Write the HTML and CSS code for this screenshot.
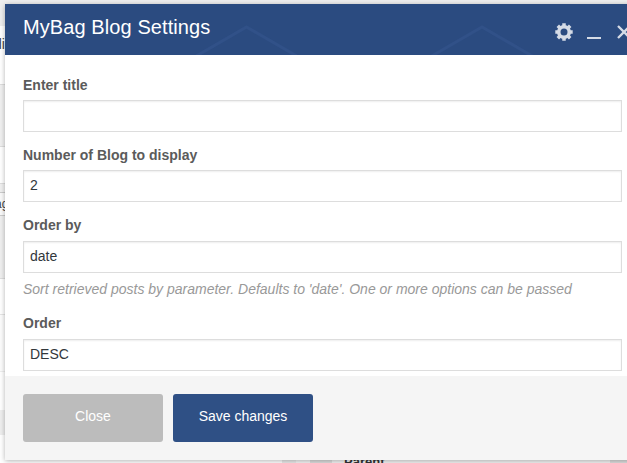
FILE: index.html
```html
<!DOCTYPE html>
<html lang="en">
<head>
<meta charset="utf-8">
<title>MyBag Blog Settings</title>
<link rel="stylesheet" href="styles.css">
</head>
<body>
<div class="page-behind">
  <div class="strip strip-top"></div>
  <div class="strip strip-title"><span>di</span></div>
  <div class="strip strip-gap"></div>
  <div class="strip strip-row"></div>
  <div class="strip strip-divider"></div>
  <div class="strip strip-tag"><span>ag</span></div>
  <div class="strip strip-wide"></div>
  <div class="strip strip-a"></div>
  <div class="strip strip-b"></div>
  <div class="strip strip-c"></div>
  <div class="strip strip-d"></div>
  <div class="strip strip-end"></div>
  <div class="strip strip-bottom">
    <i class="blank"></i><i class="handle"></i><i class="space"></i><i class="handle-dark"></i>
    <b class="parent">Parent</b><i class="corner"></i>
  </div>
</div>
<section class="modal">
  <header class="modal-header">
    <svg class="pattern" width="622" height="51" viewBox="0 0 622 51" aria-hidden="true">
      <path d="M190.500 52.500L241.500 23L292.500 52.500M426 52.500L477 23L528 52.500"/>
    </svg>
    <h1>MyBag Blog Settings</h1>
    <div class="controls">
      <svg class="gear" width="18" height="18" viewBox="0 0 18 18" aria-hidden="true">
        <circle cx="9" cy="9" r="5.250"/>
        <path d="M9 0.300V3.500M9 14.500V17.700M0.300 9H3.500M14.500 9H17.700M2.800 2.800L5 5M13 13L15.200 15.200M15.200 2.800L13 5M5 13L2.800 15.200"/>
      </svg>
      <i class="minimize"></i>
      <svg class="close" width="14" height="14" viewBox="0 0 14 14" aria-hidden="true"><path d="M1 1L13 13M13 1L1 13"/></svg>
    </div>
  </header>
  <form class="fields">
    <label for="title">Enter title</label>
    <input id="title" type="text">
    <label for="number">Number of Blog to display</label>
    <input id="number" type="text" value="2">
    <label class="order-by" for="orderby">Order by</label>
    <input id="orderby" type="text" value="date">
    <p class="hint">Sort retrieved posts by parameter. Defaults to 'date'. One or more options can be passed</p>
    <label class="order" for="order">Order</label>
    <input id="order" type="text" value="DESC">
  </form>
  <footer class="modal-footer">
    <button class="btn-close" type="button">Close</button>
    <button class="btn-save" type="button">Save changes</button>
  </footer>
</section>
</body>
</html>
```
FILE: styles.css
```css
* { box-sizing: border-box; }
body {
  margin: 0;
  width: 627px;
  height: 463px;
  overflow: hidden;
  position: relative;
  background: #fff;
  font-family: "Liberation Sans", Arial, sans-serif;
  font-size: 14px;
}
.page-behind { display: flex; flex-direction: column; height: 463px; }
.strip { flex: none; overflow: hidden; background: #fff; }
.strip-top { height: 26px; background: #eee; }
.strip-title { height: 59px; border-bottom: 1px solid #ddd; color: #444; line-height: 36px; }
.strip-title span { margin-left: -6px; }
.strip-gap { height: 62px; background: #f0f0f0; border-bottom: 1px solid #ddd; }
.strip-row { height: 37px; border-bottom: 1px solid #ddd; }
.strip-divider { height: 9px; background: #f0f0f0; border-bottom: 1px solid #ccc; }
.strip-tag { height: 23px; background: #fafafa; border-bottom: 1px solid #ccc; font-size: 12px; line-height: 22px; color: #444; }
.strip-tag span { margin-left: -5px; }
.strip-wide { height: 63px; background: #efefef; border-bottom: 1px solid #ddd; }
.strip-a { height: 36px; border-bottom: 1px solid #e5e5e5; }
.strip-b { height: 57px; background: #fcfcfc; border-bottom: 1px solid #eee; }
.strip-c { height: 38px; }
.strip-d { height: 25px; background: #eee; }
.strip-end { height: 19px; }
.strip-bottom { height: 9px; display: flex; background: #f4f4f4; font-size: 13px; line-height: 15px; }
.blank { width: 282px; background: #fff; }
.handle { width: 14px; background: #eaeaea; }
.space { width: 14px; }
.handle-dark { width: 22px; background: #ddd; }
.parent { width: 278px; padding-left: 12px; color: #333; background: #f2f2f2; }
.corner { width: 17px; background: #ddd; }
.modal {
  position: absolute;
  left: 5px;
  top: 4px;
  width: 640px;
  height: 456px;
  display: flex;
  flex-direction: column;
  background: #fff;
  box-shadow: 0 1px 5px rgba(0, 0, 0, .3);
}
.modal-header {
  position: relative;
  flex: none;
  height: 51px;
  padding-left: 18px;
  display: flex;
  background: #2b4b80;
}
.pattern { position: absolute; left: 0; top: 0; fill: none; stroke: #315188; stroke-width: 3; }
.modal-header h1 {
  position: relative;
  width: 530px;
  margin: 0;
  color: #fff;
  font-size: 20px;
  font-weight: 400;
  letter-spacing: .09px;
  line-height: 47px;
  white-space: nowrap;
}
.controls { position: relative; display: flex; align-items: flex-start; padding-top: 19px; margin-left: 2px; }
.controls svg { flex: none; fill: none; stroke: #d5dbe6; }
.gear { stroke-width: 3.500; }
.minimize { flex: none; width: 14px; height: 2px; margin: 14px 0 0 14px; background: #d5dbe6; }
.close { margin: 2px 0 0 16px; stroke-width: 2.300; }
.fields { flex: none; width: 617px; height: 321px; padding: 21px 0 0 18px; display: flex; flex-direction: column; }
.fields label { flex: none; height: 24px; color: #5b5b5b; font-weight: 700; line-height: 18px; white-space: nowrap; }
.fields input {
  flex: none;
  width: 599px;
  height: 32px;
  margin: 0 0 14px;
  padding: 0 6px 2px;
  border: 1px solid #ddd;
  border-radius: 0;
  background: #fff;
  box-shadow: inset 0 1px 2px rgba(0, 0, 0, .07);
  color: #32373c;
  font: 14px "Liberation Sans", Arial, sans-serif;
}
.fields .order-by { height: 25px; }
.fields #orderby { margin-bottom: 7px; }
.hint { flex: none; margin: 0 0 16px; height: 18px; color: #999; font-style: italic; line-height: 18px; white-space: nowrap; }
.fields .order { height: 25px; }
.fields #order { margin-bottom: 0; }
.modal-footer { flex: none; height: 84px; padding: 18px; display: flex; gap: 10px; background: #f5f5f5; }
.modal-footer button {
  width: 140px;
  height: 48px;
  padding: 0 0 4px;
  border: 0;
  border-radius: 3px;
  color: #fff;
  font: 14px "Liberation Sans", Arial, sans-serif;
}
.btn-close { background: #bcbcbc; }
.modal-footer .btn-save { background: #2f5085; }
```
